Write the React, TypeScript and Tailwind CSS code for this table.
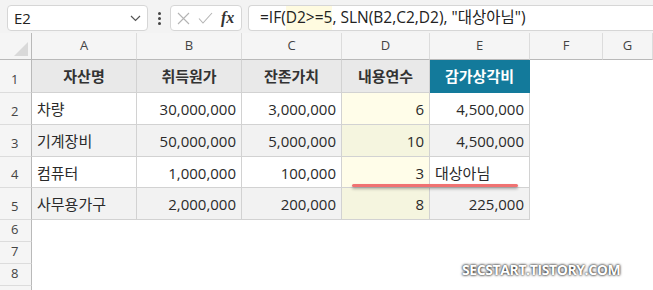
import React from "react";

const FONT = { fontFamily: '"Open Sans", "Noto Sans CJK KR", sans-serif' };

const COLS = ["A", "B", "C", "D", "E", "F", "G"];

type Cell = { v: string; align: "l" | "r" };

const ROWS: Cell[][] = [
  [{ v: "차량", align: "l" }, { v: "30,000,000", align: "r" }, { v: "3,000,000", align: "r" }, { v: "6", align: "r" }, { v: "4,500,000", align: "r" }],
  [{ v: "기계장비", align: "l" }, { v: "50,000,000", align: "r" }, { v: "5,000,000", align: "r" }, { v: "10", align: "r" }, { v: "4,500,000", align: "r" }],
  [{ v: "컴퓨터", align: "l" }, { v: "1,000,000", align: "r" }, { v: "100,000", align: "r" }, { v: "3", align: "r" }, { v: "대상아님", align: "l" }],
  [{ v: "사무용가구", align: "l" }, { v: "2,000,000", align: "r" }, { v: "200,000", align: "r" }, { v: "8", align: "r" }, { v: "225,000", align: "r" }],
];

const HEADERS = ["자산명", "취득원가", "잔존가치", "내용연수", "감가상각비"];
const ROW_H = ["h-[32px]", "h-[32px]", "h-[31px]", "h-[32px]"];

function RowNum({ n, h }: { n: number; h: string }) {
  return (
    <div className={`${h} flex items-end pb-[3px] pl-[11px] bg-[#f5f5f5] border-r border-r-[#b9b9b9] border-b border-b-[#dcdcdc] text-[13px] text-[#444]`}>
      {n}
    </div>
  );
}

export default function App() {
  return (
    <div className="w-[653px] h-[290px] bg-white relative overflow-hidden" style={FONT}>
      {/* formula bar strip */}
      <div className="h-[33px] bg-[#f3f3f3] flex items-start pt-[5px] pl-[7px]">
        <div className="w-[141px] h-[26px] bg-white border border-[#d6d6d6] rounded-[4px] flex items-center justify-between pl-[6px] pr-[6px] text-[15px] text-[#222]">
          <span>E2</span>
          <svg width="11" height="7" viewBox="0 0 11 7"><path d="M1 1l4.5 4.5L10 1" fill="none" stroke="#555" strokeWidth="1.2" /></svg>
        </div>
        <div className="w-[22px] h-[26px] flex flex-col items-center justify-center gap-[2px]">
          <span className="w-[3px] h-[3px] rounded-full bg-[#444]" />
          <span className="w-[3px] h-[3px] rounded-full bg-[#444]" />
          <span className="w-[3px] h-[3px] rounded-full bg-[#444]" />
        </div>
        <div className="w-[72px] h-[26px] bg-white border border-[#d6d6d6] rounded-[4px] flex items-center pl-[6px] gap-[8px]">
          <svg width="13" height="13" viewBox="0 0 13 13"><path d="M1 1l11 11M12 1L1 12" stroke="#b4b4b4" strokeWidth="1.1" /></svg>
          <svg width="15" height="12" viewBox="0 0 15 12"><path d="M1 6.5l4 4.5L14 1" fill="none" stroke="#b4b4b4" strokeWidth="1.1" /></svg>
          <span className="italic font-bold text-[16px] text-[#333] leading-none" style={{ fontFamily: '"Liberation Serif", serif' }}>fx</span>
        </div>
        <div className="ml-[6px] flex-1 h-[26px] bg-white border border-[#d6d6d6] border-r-0 rounded-l-[4px] flex items-center pl-[11px] text-[15.5px] text-[#222] whitespace-nowrap">
          <span>=IF(</span>
          <span className="bg-[#fffbe0]">D2&gt;=5</span>
          <span>, SLN(B2,C2,D2), "대상아님")</span>
        </div>
      </div>

      {/* sheet */}
      <div className="grid grid-cols-[32px_105px_105px_100px_88px_100px_73px_50px]">
        {/* column letters */}
        <div className="h-[27px] bg-[#f5f5f5] border-r border-r-[#b9b9b9] border-b border-b-[#b9b9b9] relative">
          <svg className="absolute right-[3px] bottom-[3px]" width="14" height="14" viewBox="0 0 14 14"><path d="M14 0V14H0Z" fill="#d9d9d9" /></svg>
        </div>
        {COLS.map((c) => (
          <div key={c} className="h-[27px] bg-[#f5f5f5] border-r border-r-[#dcdcdc] border-b border-b-[#b9b9b9] flex items-center justify-center text-[13px] text-[#444]">
            {c}
          </div>
        ))}

        {/* row 1 headers */}
        <RowNum n={1} h="h-[33px]" />
        {HEADERS.map((h, i) => (
          <div
            key={h}
            className={`h-[33px] flex items-center justify-center text-[15px] font-bold border-r border-b ${
              i === 4 ? "bg-[#137a9b] text-white border-[#137a9b]" : "bg-[#e9e9e9] text-[#333] border-[#d2d2d2]"
            }`}
          >
            {h}
          </div>
        ))}
        <div className="h-[33px] col-span-2" />

        {ROWS.map((row, r) => (
          <React.Fragment key={r}>
            <RowNum n={r + 2} h={ROW_H[r]} />
            {row.map((cell, i) => {
              const odd = r % 2 === 1;
              const bg = i === 3 ? (odd ? "bg-[#f5f5df]" : "bg-[#fffde9]") : odd ? "bg-[#f2f2f2]" : "bg-white";
              return (
                <div
                  key={i}
                  className={`${ROW_H[r]} ${bg} flex items-center pt-[2px] px-[5px] text-[15px] text-[#2a2a2a] border-r border-b border-[#d2d2d2] whitespace-nowrap ${
                    cell.align === "r" ? "justify-end" : "justify-start"
                  }`}
                >
                  {cell.v}
                </div>
              );
            })}
            <div className={`${ROW_H[r]} col-span-2`} />
          </React.Fragment>
        ))}

        {[6, 7, 8].map((n) => (
          <React.Fragment key={n}>
            <div className="h-[22px] flex items-end pb-[2px] pl-[11px] bg-[#f5f5f5] border-r border-r-[#b9b9b9] border-b border-b-[#dcdcdc] text-[13px] text-[#444]">
              {n}
            </div>
            <div className="h-[22px] col-span-7" />
          </React.Fragment>
        ))}
        <div className="h-[22px] bg-[#f5f5f5] border-r border-r-[#b9b9b9]" />
        <div className="h-[22px] col-span-7" />
      </div>

      {/* red underline marker */}
      <div className="absolute left-[352px] top-[184px] w-[166px] h-[3px] rounded-full bg-[#f07272] shadow-[0_2px_3px_rgba(0,0,0,0.3)]" />

      {/* watermark */}
      <div
        className="absolute left-[462px] top-[259px] text-[14px] font-bold text-white tracking-[-0.4px] [text-shadow:0_0_3px_#222,0_0_2px_#444]"
        style={{ fontFamily: '"Open Sans", sans-serif' }}
      >
        SECSTART.TISTORY.COM
      </div>
    </div>
  );
}
